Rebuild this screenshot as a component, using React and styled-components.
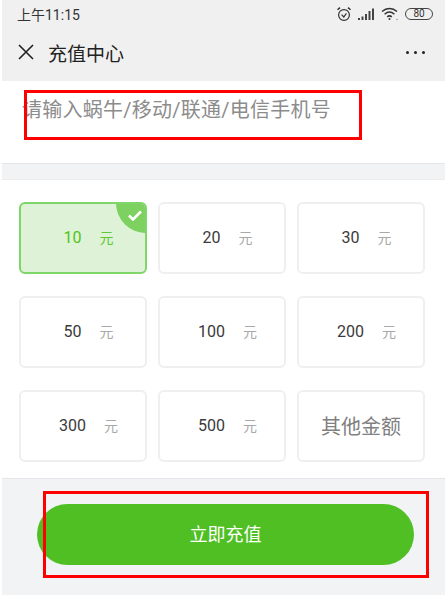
import React from "react";
import styled, { createGlobalStyle } from "styled-components";

const GlobalStyle = createGlobalStyle`
  html, body {
    margin: 0;
    padding: 0;
    background: #ffffff;
  }
  * {
    box-sizing: border-box;
  }
`;

const Page = styled.div`
  position: relative;
  width: 445px;
  height: 595px;
  padding-left: 2px;
  overflow: hidden;
  display: flex;
  flex-direction: column;
  font-family: Roboto, "Noto Sans CJK SC", sans-serif;
`;

const Top = styled.div`
  height: 81px;
  background: #f0f0f0;
  display: flex;
  flex-direction: column;
`;

const StatusBar = styled.div`
  height: 28px;
  padding: 0 12px 0 15px;
  display: flex;
  align-items: center;
  justify-content: space-between;
  color: #333333;
`;

const Time = styled.span`
  font-size: 14px;
`;

const StatusIcons = styled.div`
  display: flex;
  align-items: center;
  gap: 6px;
`;

const Battery = styled.div`
  width: 28px;
  height: 12px;
  border: 1px solid #444444;
  border-radius: 6px;
  font-size: 10px;
  line-height: 10px;
  text-align: center;
  color: #333333;
`;

const NavBar = styled.div`
  flex: 1;
  padding: 0 20px 5px 15px;
  display: flex;
  align-items: center;
  color: #222222;
`;

const NavTitle = styled.span`
  margin-left: 13px;
  font-size: 19px;
`;

const More = styled.div`
  margin-left: auto;
  display: flex;
  gap: 5px;
`;

const Dot = styled.span`
  width: 3px;
  height: 3px;
  border-radius: 50%;
  background: #222222;
`;

const InputArea = styled.div`
  height: 83px;
  padding: 16px 0 0 20px;
  background: #ffffff;
  border-bottom: 1px solid #e6e6e6;
`;

const Placeholder = styled.div`
  font-size: 20px;
  letter-spacing: 0.25px;
  line-height: 26px;
  color: #8c8c8c;
`;

const Spacer = styled.div`
  height: 16px;
  background: #f2f3f5;
  border-bottom: 1px solid #ececec;
`;

const GridArea = styled.div`
  height: 298px;
  padding: 22px 0 0 17px;
  background: #ffffff;
`;

const Grid = styled.div`
  display: grid;
  grid-template-columns: repeat(3, 128px);
  grid-auto-rows: 72px;
  column-gap: 11px;
  row-gap: 22px;
`;

const Card = styled.div`
  position: relative;
  overflow: hidden;
  display: flex;
  align-items: center;
  justify-content: center;
  gap: 18px;
  padding: 0 0 2px ${(props) => (props.$other ? 0 : 11)}px;
  border-radius: 6px;
  border: 2px solid ${(props) => (props.$active ? "#7fd668" : "#efefef")};
  background: ${(props) => (props.$active ? "#ddf2d6" : "#ffffff")};
`;

const Amount = styled.span`
  font-size: 16px;
  color: ${(props) => (props.$active ? "#52c41a" : "#3a3a3a")};
`;

const Unit = styled.span`
  font-size: 14px;
  color: ${(props) => (props.$active ? "#5fc832" : "#a8a8a8")};
`;

const OtherText = styled.span`
  font-size: 20px;
  color: #808080;
`;

const Corner = styled.div`
  position: absolute;
  top: -31px;
  right: -31px;
  width: 60px;
  height: 60px;
  border-radius: 50%;
  background: #7dd160;
`;

const CheckMark = styled.svg`
  position: absolute;
  top: 5px;
  right: 2px;
`;

const Footer = styled.div`
  flex: 1;
  padding: 25px 0 0 35px;
  background: #f2f3f5;
  border-top: 1px solid #e4e5e8;
`;

const PayButton = styled.div`
  width: 377px;
  height: 61px;
  padding-bottom: 3px;
  border-radius: 31px;
  background: #50bf24;
  color: #ffffff;
  font-size: 18px;
  display: flex;
  align-items: center;
  justify-content: center;
`;

// red boxes drawn over the screenshot
const Annotation = styled.div`
  position: absolute;
  left: ${(props) => props.$x}px;
  top: ${(props) => props.$y}px;
  width: ${(props) => props.$w}px;
  height: ${(props) => props.$h}px;
  border: 3px solid #ff0000;
`;

const amounts = ["10", "20", "30", "50", "100", "200", "300", "500"];

function Alarm() {
  return (
    <svg width="16" height="16" viewBox="0 0 16 16" fill="none" stroke="#333" strokeWidth="1.2">
      <circle cx="8" cy="9" r="5.4" />
      <path d="M5.6 8.6 7.8 11l2.6-3.6" />
      <path d="M1.5 3.8 4 1.6M14.5 3.8 12 1.6" strokeWidth="1.5" />
    </svg>
  );
}

function Signal() {
  return (
    <svg width="17" height="13" viewBox="0 0 17 13" fill="#444">
      <rect x="0" y="10" width="2" height="2" />
      <rect x="3.5" y="8.5" width="2" height="3.5" />
      <rect x="7" y="6" width="2" height="6" />
      <rect x="10.5" y="3" width="2" height="9" />
      <rect x="14" y="0.5" width="2" height="11.5" />
    </svg>
  );
}

function Wifi() {
  return (
    <svg width="18" height="14" viewBox="0 0 18 14" fill="none" stroke="#333" strokeWidth="1.5">
      <path d="M1 4.5C5.5 .6 11.5 .6 16 4.5" />
      <path d="M3.6 7.2c3-2.6 6.8-2.6 9.8 0" />
      <path d="M6.2 9.8c1.5-1.2 3.1-1.2 4.6 0" />
      <circle cx="8.5" cy="12" r="1" fill="#333" stroke="none" />
      <circle cx="16" cy="12.5" r=".7" fill="#888" stroke="none" />
    </svg>
  );
}

export default function App() {
  return (
    <Page>
      <GlobalStyle />
      <Top>
        <StatusBar>
          <Time>上午11:15</Time>
          <StatusIcons>
            <Alarm />
            <Signal />
            <Wifi />
            <Battery>80</Battery>
          </StatusIcons>
        </StatusBar>
        <NavBar>
          <svg width="18" height="18" viewBox="0 0 18 18" stroke="#222" strokeWidth="1.6">
            <path d="M2 2l14 14M16 2 2 16" />
          </svg>
          <NavTitle>充值中心</NavTitle>
          <More>
            <Dot />
            <Dot />
            <Dot />
          </More>
        </NavBar>
      </Top>
      <InputArea>
        <Placeholder>请输入蜗牛/移动/联通/电信手机号</Placeholder>
      </InputArea>
      <Spacer />
      <GridArea>
        <Grid>
          {amounts.map((amount, i) => (
            <Card key={amount} $active={i === 0}>
              <Amount $active={i === 0}>{amount}</Amount>
              <Unit $active={i === 0}>元</Unit>
              {i === 0 && <Corner />}
              {i === 0 && (
                <CheckMark width="16" height="13" viewBox="0 0 16 13" fill="none" stroke="#fff" strokeWidth="2.6">
                  <path d="M2 6.5l4 4L14 2.5" />
                </CheckMark>
              )}
            </Card>
          ))}
          <Card $other>
            <OtherText>其他金额</OtherText>
          </Card>
        </Grid>
      </GridArea>
      <Footer>
        <PayButton>立即充值</PayButton>
      </Footer>
      <Annotation $x={24} $y={90} $w={338} $h={50} />
      <Annotation $x={43} $y={491} $w={386} $h={87} />
    </Page>
  );
}
